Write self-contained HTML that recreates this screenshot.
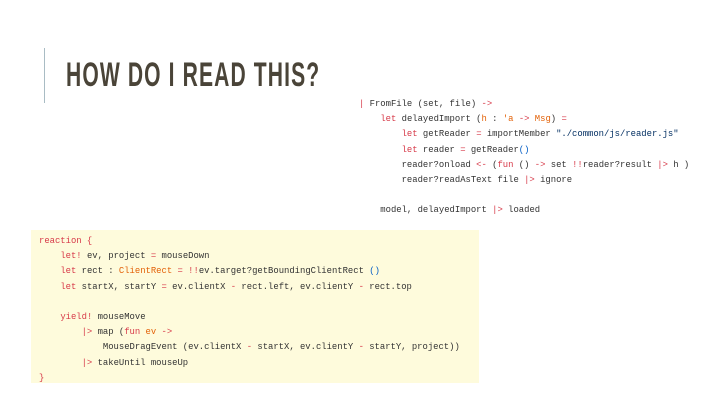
<!DOCTYPE html>
<html><head><style>
body{margin:0;width:720px;height:405px;background:#fff;position:relative;overflow:hidden}
.bar{position:absolute;left:44px;top:48px;width:1px;height:55px;background:#a9bcc4}
.title{position:absolute;left:66px;top:56px;font:bold 34px "Liberation Sans",sans-serif;color:#4a4438;transform:scaleX(0.62);transform-origin:0 0;white-space:nowrap;letter-spacing:1.8px}
pre{margin:0;font:8.9px/15.2px "Liberation Mono",monospace;color:#333;position:absolute;white-space:pre}
.k{color:#d73a49}.o{color:#e36209}.s{color:#032f62}.b{color:#005cc5}
.y{left:31px;top:230px;width:440px;height:145px;background:#fefbdc;padding:4px 0 4px 8px}
</style></head><body>
<div class="bar"></div>
<div class="title">HOW DO I READ THIS?</div>
<pre style="left:359px;top:97px"><span class="k">|</span> FromFile (set, file) <span class="k">-&gt;</span>
    <span class="k">let</span> delayedImport (<span class="o">h</span> : <span class="o">'a</span> <span class="k">-&gt;</span> <span class="o">Msg</span>) <span class="k">=</span>
        <span class="k">let</span> getReader <span class="k">=</span> importMember <span class="s">"./common/js/reader.js"</span>
        <span class="k">let</span> reader <span class="k">=</span> getReader<span class="b">()</span>
        reader?onload <span class="k">&lt;-</span> (<span class="k">fun</span> () <span class="k">-&gt;</span> set <span class="k">!!</span>reader?result <span class="k">|&gt;</span> h )
        reader?readAsText file <span class="k">|&gt;</span> ignore

    model, delayedImport <span class="k">|&gt;</span> loaded</pre>
<pre class="y"><span class="k">reaction {</span>
    <span class="k">let!</span> ev, project <span class="k">=</span> mouseDown
    <span class="k">let</span> rect : <span class="o">ClientRect</span> <span class="k">=</span> <span class="k">!!</span>ev.target?getBoundingClientRect <span class="b">()</span>
    <span class="k">let</span> startX, startY <span class="k">=</span> ev.clientX <span class="k">-</span> rect.left, ev.clientY <span class="k">-</span> rect.top

    <span class="k">yield!</span> mouseMove
        <span class="k">|&gt;</span> map (<span class="k">fun</span> <span class="o">ev</span> <span class="k">-&gt;</span>
            MouseDragEvent (ev.clientX <span class="k">-</span> startX, ev.clientY <span class="k">-</span> startY, project))
        <span class="k">|&gt;</span> takeUntil mouseUp
<span class="k">}</span></pre>
</body></html>
